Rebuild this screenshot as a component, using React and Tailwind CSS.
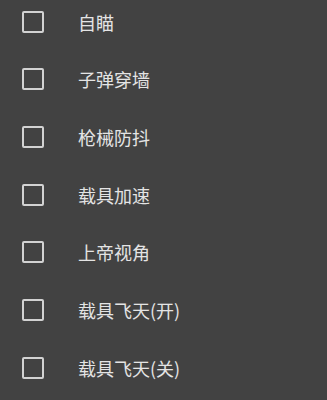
const items = ['自瞄', '子弹穿墙', '枪械防抖', '载具加速', '上帝视角', '载具飞天(开)', '载具飞天(关)'];

export default function App() {
  return (
    <div
      className="h-[400px] w-[327px] overflow-hidden bg-[#424242]"
      style={{ fontFamily: '"Noto Sans CJK SC", "Noto Sans", sans-serif' }}
    >
      <ul className="-mt-[7px]">
        {items.map((label) => (
          <li key={label} className="flex h-[57.67px] items-center pl-[22px]">
            <span className="h-[22px] w-[22px] shrink-0 rounded-[2px] border-2 border-[#d2d2d2]" />
            <span className="ml-[34px] text-[18px] leading-none text-[#e4e4e4]">{label}</span>
          </li>
        ))}
      </ul>
    </div>
  );
}
